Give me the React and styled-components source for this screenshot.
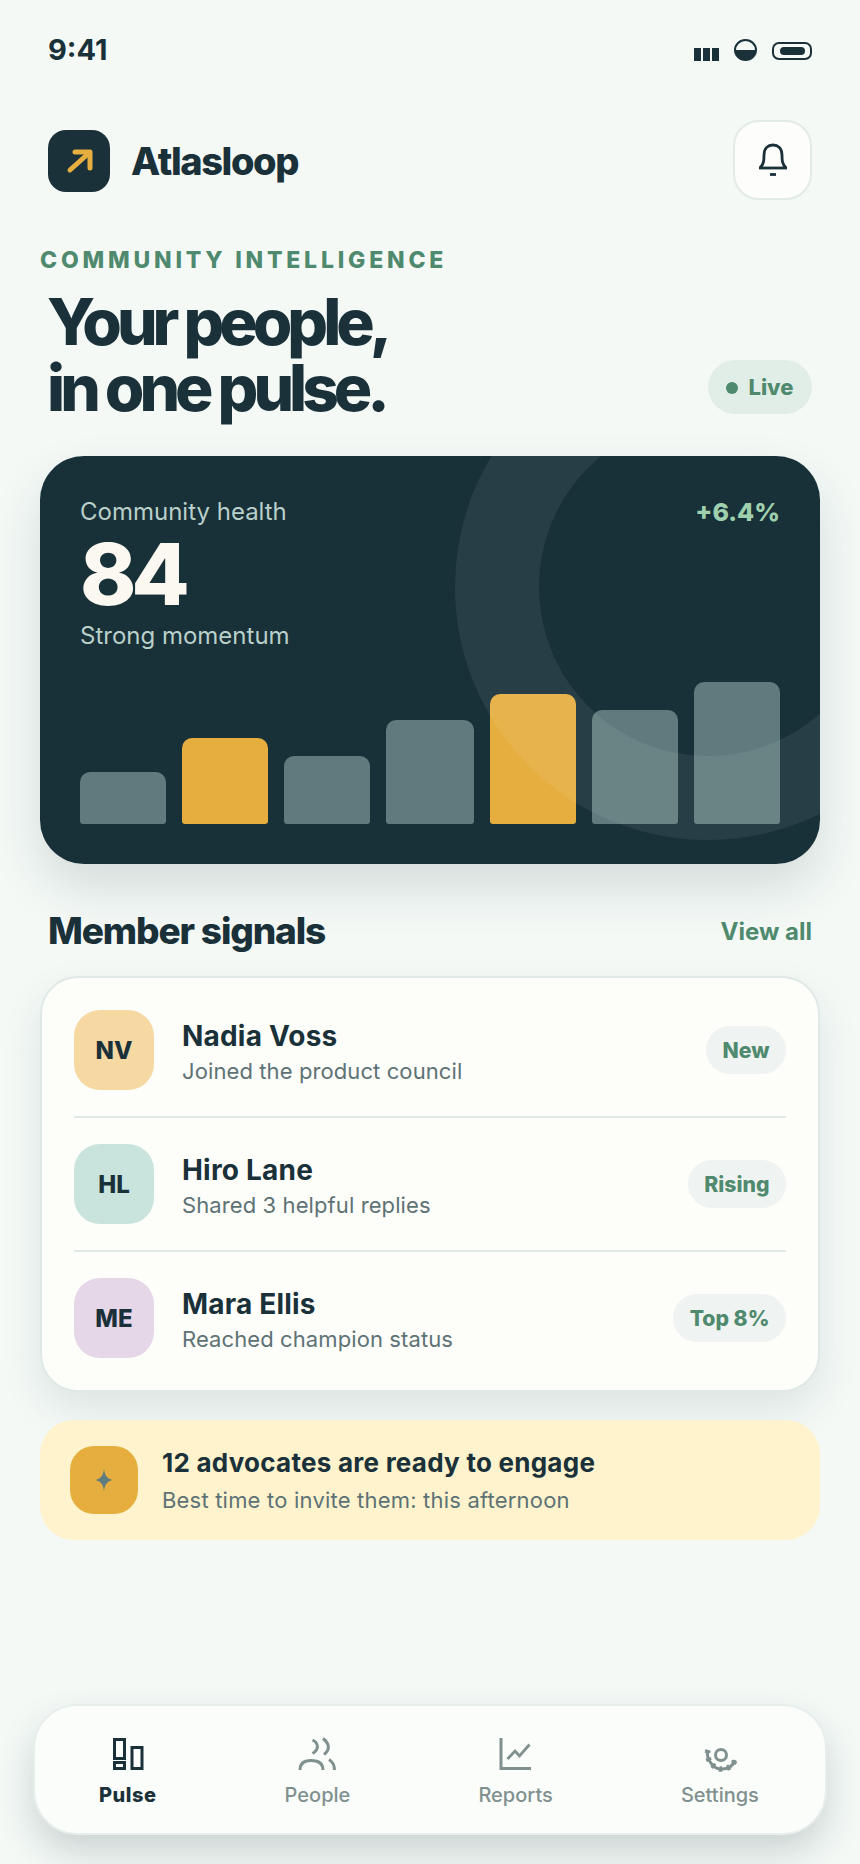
import React from "react";
import styled, { createGlobalStyle } from "styled-components";

const ink = "#1a3139";
const green = "#4f8a6f";
const muted = "#5d7275";
const navMuted = "#7f908f";
const gold = "#e6ae3f";

const Global = createGlobalStyle`
  html, body { margin: 0; padding: 0; background: #f4f9f6; }
  body { font-family: Inter, "Noto Sans", sans-serif; color: ${ink}; -webkit-font-smoothing: antialiased; }
  * { box-sizing: border-box; }
`;

const Page = styled.div`
  width: 860px;
  height: 1864px;
  overflow: hidden;
  display: flex;
  flex-direction: column;
  padding: 34px 40px 29px;
  background: #f4f9f6;
`;

const StatusBar = styled.div`
  display: flex;
  justify-content: space-between;
  align-items: center;
  height: 32px;
  padding: 0 8px;
`;
const Time = styled.div`
  font-size: 29px;
  font-weight: 700;
  line-height: 32px;
`;
const StatusIcons = styled.div`
  display: flex;
  align-items: flex-end;
  gap: 15px;
  height: 22px;
`;
const Signal = styled.div`
  display: flex;
  gap: 2px;
  span { display: block; width: 7px; height: 13px; background: ${ink}; }
`;
const HalfDot = styled.div`
  width: 23px;
  height: 22px;
  border-radius: 50%;
  border: 2px solid ${ink};
  background: linear-gradient(#f4f9f6 0 48%, ${ink} 48%);
`;
const Battery = styled.div`
  width: 40px;
  height: 18px;
  margin-bottom: 1px;
  border: 2.5px solid ${ink};
  border-radius: 7px;
  display: flex;
  align-items: center;
  justify-content: center;
  span { display: block; width: 25px; height: 8px; border-radius: 4px; background: ${ink}; }
`;

const Header = styled.header`
  display: flex;
  justify-content: space-between;
  align-items: center;
  margin-top: 54px;
  padding: 0 8px;
`;
const Brand = styled.div`
  display: flex;
  align-items: center;
  gap: 21px;
  margin-top: 2px;
`;
const LogoBox = styled.div`
  width: 62px;
  height: 62px;
  border-radius: 18px;
  background: ${ink};
  svg { display: block; }
`;
const BrandName = styled.div`
  font-size: 38px;
  font-weight: 800;
  letter-spacing: -0.037em;
  line-height: 44px;
`;
const BellButton = styled.div`
  width: 79px;
  height: 80px;
  border-radius: 26px;
  background: #fdfdfb;
  border: 2px solid #e2ebe8;
  display: flex;
  align-items: center;
  justify-content: center;
`;

const Eyebrow = styled.div`
  margin-top: 45px;
  font-size: 23px;
  line-height: 30px;
  font-weight: 800;
  letter-spacing: 0.165em;
  color: ${green};
`;
const TitleRow = styled.div`
  display: flex;
  justify-content: space-between;
  align-items: flex-end;
  margin-top: 14px;
  padding: 0 8px;
`;
const Title = styled.h1`
  margin: 0 0 0 -1px;
  font-size: 64px;
  line-height: 66px;
  font-weight: 800;
  letter-spacing: -0.078em;
`;
const LivePill = styled.div`
  display: flex;
  align-items: center;
  gap: 10px;
  height: 54px;
  margin-bottom: 7px;
  padding: 0 18.5px;
  border-radius: 27px;
  background: #e1eee7;
  color: ${green};
  font-size: 22px;
  font-weight: 800;
`;
const LiveDot = styled.span`
  width: 12px;
  height: 12px;
  border-radius: 50%;
  background: ${green};
  margin-top: 2px;
`;

const Hero = styled.section`
  position: relative;
  overflow: hidden;
  margin-top: 35px;
  height: 408px;
  padding: 40px;
  border-radius: 44px;
  background: #183038;
  box-shadow: 0 24px 50px rgba(24, 48, 56, 0.14);
  display: flex;
  flex-direction: column;
`;
const Ring = styled.div`
  position: absolute;
  left: 415px;
  top: -122px;
  width: 506px;
  height: 506px;
  border-radius: 50%;
  border: 84px solid rgba(255, 255, 255, 0.07);
`;
const HeroTop = styled.div`
  display: flex;
  justify-content: space-between;
  line-height: 32px;
  font-size: 24px;
`;
const HeroLabel = styled.div`
  color: #b9cfca;
`;
const HeroDelta = styled.div`
  color: #9fd0ae;
  font-size: 25px;
  font-weight: 800;
`;
const Score = styled.div`
  margin: 1px 0 -1px;
  font-size: 85px;
  line-height: 92px;
  font-weight: 800;
  letter-spacing: -0.06em;
  color: #fbf8f1;
`;
const Bars = styled.div`
  display: grid;
  grid-template-columns: repeat(3, 86px) 88px repeat(3, 86px);
  gap: 16px;
  align-items: end;
  margin-top: auto;
  height: 142px;
`;
const Bar = styled.div`
  height: ${(p) => p.$h}px;
  border-radius: 10px 10px 3px 3px;
  background: ${(p) => (p.$hot ? gold : "rgba(166, 198, 194, 0.5)")};
`;

const SectionHead = styled.div`
  display: flex;
  justify-content: space-between;
  align-items: center;
  margin-top: 45px;
  padding: 0 8px;
`;
const SectionTitle = styled.h2`
  margin: 0;
  font-size: 37px;
  line-height: 44px;
  font-weight: 800;
  letter-spacing: -0.031em;
`;
const ViewAll = styled.div`
  font-size: 24px;
  font-weight: 700;
  color: ${green};
`;

const ListCard = styled.section`
  margin-top: 23px;
  padding: 6px 32px;
  height: 416px;
  border-radius: 38px;
  border: 2px solid #dfe9e6;
  background: #fdfdfa;
  box-shadow: 0 18px 40px rgba(24, 48, 56, 0.1);
`;
const Row = styled.div`
  display: flex;
  align-items: center;
  height: 134px;
  padding-bottom: ${(p) => (p.$last ? 2 : 0)}px;
  border-bottom: ${(p) => (p.$last ? "none" : "2px solid #dfe9e6")};
`;
const Avatar = styled.div`
  flex: none;
  width: 80px;
  height: 80px;
  border-radius: 26px;
  background: ${(p) => p.$bg};
  display: flex;
  align-items: center;
  justify-content: center;
  font-size: 24px;
  font-weight: 800;
  padding-top: 1px;
`;
const RowText = styled.div`
  flex: 1;
  margin-left: 28px;
  padding-top: 5px;
`;
const Name = styled.div`
  font-size: 28px;
  line-height: 34px;
  font-weight: 700;
  letter-spacing: 0.2px;
`;
const Sub = styled.div`
  margin-top: 3px;
  font-size: 22px;
  line-height: 30px;
  letter-spacing: 0.1px;
  color: ${muted};
`;
const Tag = styled.div`
  height: 48px;
  padding: 0 16.5px;
  border-radius: 24px;
  background: #eff3f1;
  color: ${green};
  font-size: 21.2px;
  font-weight: 800;
  display: flex;
  align-items: center;
`;

const Banner = styled.section`
  margin-top: 28px;
  height: 120px;
  padding: 0 30px;
  border-radius: 34px;
  background: #fff3ce;
  display: flex;
  align-items: center;
  gap: 24px;
`;
const SparkBox = styled.div`
  width: 68px;
  height: 68px;
  border-radius: 24px;
  background: ${gold};
  display: flex;
  align-items: center;
  justify-content: center;
`;
const BannerTitle = styled.div`
  font-size: 26px;
  line-height: 34px;
  font-weight: 700;
  letter-spacing: 0.25px;
`;
const BannerSub = styled.div`
  margin-top: 5px;
  font-size: 22px;
  line-height: 30px;
  letter-spacing: 0.2px;
  color: ${muted};
`;

const Nav = styled.nav`
  margin: auto -7px 0;
  height: 131px;
  border-radius: 44px;
  border: 2px solid #e8eeeb;
  background: #fbfdfb;
  box-shadow: 0 18px 36px rgba(24, 48, 56, 0.18);
  display: flex;
  justify-content: space-around;
  align-items: flex-start;
  padding: 32px 2px 0 0;
`;
const NavItem = styled.div`
  display: flex;
  flex-direction: column;
  align-items: center;
  color: ${(p) => (p.$active ? ink : navMuted)};
  font-size: 20px;
  font-weight: ${(p) => (p.$active ? 800 : 500)};
  letter-spacing: ${(p) => (p.$active ? "0.5px" : "0")};
  line-height: 28px;
  svg { display: block; margin-bottom: 11px; overflow: visible; }
`;

const LogoIcon = () => (
  <svg width="62" height="62" viewBox="0 0 62 62" fill="none" stroke={gold} strokeWidth="5" strokeLinecap="round" strokeLinejoin="round">
    <path d="M22 40 L41 23" />
    <path d="M27 22 H42 V38" />
  </svg>
);

const BellIcon = () => (
  <svg width="32" height="34" viewBox="0 0 32 34" fill="none" stroke={ink} strokeWidth="2.8">
    <path d="M2 25 H30" />
    <path d="M3 25 C7 21 7 17 7 12 C7 5 11 2 16 2 C21 2 25 5 25 12 C25 17 25 21 29 25" />
    <path d="M13 31.5 H19" />
  </svg>
);

const PulseIcon = () => (
  <svg width="32" height="32" viewBox="0 0 32 32" fill="none" stroke={ink} strokeWidth="3">
    <rect x="2.5" y="1.5" width="10" height="19" />
    <rect x="2.5" y="24.5" width="10" height="6" />
    <rect x="20" y="9.5" width="10" height="21" />
  </svg>
);

const PeopleIcon = () => (
  <svg width="40" height="32" viewBox="0 0 40 32" fill="none" stroke={navMuted} strokeWidth="3">
    <path d="M15.5 2 C22 5 22 12 15.5 15.5" />
    <path d="M26 0.5 C33 6 33 12 27 16.5" />
    <path d="M3 32 C3 25 7 22.5 14 22.5 C21 22.5 26 25 26 32" />
    <path d="M32 21.5 C36 24 37.5 27 37.5 32" />
  </svg>
);

const ReportsIcon = () => (
  <svg width="32" height="32" viewBox="1 0 32 32" fill="none" stroke={navMuted} strokeWidth="3">
    <path d="M2 0 V30.5 H32" />
    <path d="M8.5 21 L16 13 L20.5 18 L30.5 6.5" strokeWidth="2.8" />
  </svg>
);

const SettingsIcon = () => (
  <svg width="34" height="32" viewBox="-1 -6 34 32" fill="none" stroke={navMuted}>
    <circle cx="17" cy="11" r="5.5" strokeWidth="3" />
    <path d="M4 6 C1 17 12 26 18 25 C24 25 29 22 31 16" strokeWidth="3" />
    <path d="M4 6 C1 17 12 26 18 25 C24 25 29 22 31 16" strokeWidth="5.5" strokeDasharray="3 5" />
  </svg>
);

const Spark = () => (
  <svg width="20" height="24" viewBox="0 0 20 24" fill="#5d7d80">
    <path d="M10 1 C11 8 13 10.5 19 12 C13 13.5 11 16 10 23 C9 16 7 13.5 1 12 C7 10.5 9 8 10 1 Z" />
  </svg>
);

const members = [
  { i: "NV", bg: "#f6d9a2", n: "Nadia Voss", s: "Joined the product council", t: "New" },
  { i: "HL", bg: "#c9e4dc", n: "Hiro Lane", s: "Shared 3 helpful replies", t: "Rising" },
  { i: "ME", bg: "#e5d6e8", n: "Mara Ellis", s: "Reached champion status", t: "Top 8%" },
];
const bars = [
  { h: 52 }, { h: 86, hot: true }, { h: 68 }, { h: 104 }, { h: 130, hot: true }, { h: 114 }, { h: 142 },
];

export default function App() {
  return (
    <Page>
      <Global />
      <StatusBar>
        <Time>9:41</Time>
        <StatusIcons>
          <Signal><span /><span /><span /></Signal>
          <HalfDot />
          <Battery><span /></Battery>
        </StatusIcons>
      </StatusBar>
      <Header>
        <Brand>
          <LogoBox><LogoIcon /></LogoBox>
          <BrandName>Atlasloop</BrandName>
        </Brand>
        <BellButton><BellIcon /></BellButton>
      </Header>
      <Eyebrow>COMMUNITY INTELLIGENCE</Eyebrow>
      <TitleRow>
        <Title>Your people,<br />in one pulse.</Title>
        <LivePill><LiveDot />Live</LivePill>
      </TitleRow>
      <Hero>
        <HeroTop>
          <HeroLabel>Community health</HeroLabel>
          <HeroDelta>+6.4%</HeroDelta>
        </HeroTop>
        <Score>84</Score>
        <HeroTop><HeroLabel>Strong momentum</HeroLabel></HeroTop>
        <Bars>
          {bars.map((b, i) => <Bar key={i} $h={b.h} $hot={b.hot} />)}
        </Bars>
        <Ring />
      </Hero>
      <SectionHead>
        <SectionTitle>Member signals</SectionTitle>
        <ViewAll>View all</ViewAll>
      </SectionHead>
      <ListCard>
        {members.map((m, i) => (
          <Row key={m.i} $last={i === members.length - 1}>
            <Avatar $bg={m.bg}>{m.i}</Avatar>
            <RowText>
              <Name>{m.n}</Name>
              <Sub>{m.s}</Sub>
            </RowText>
            <Tag>{m.t}</Tag>
          </Row>
        ))}
      </ListCard>
      <Banner>
        <SparkBox><Spark /></SparkBox>
        <div>
          <BannerTitle>12 advocates are ready to engage</BannerTitle>
          <BannerSub>Best time to invite them: this afternoon</BannerSub>
        </div>
      </Banner>
      <Nav>
        <NavItem $active><PulseIcon />Pulse</NavItem>
        <NavItem><PeopleIcon />People</NavItem>
        <NavItem><ReportsIcon />Reports</NavItem>
        <NavItem><SettingsIcon />Settings</NavItem>
      </Nav>
    </Page>
  );
}
